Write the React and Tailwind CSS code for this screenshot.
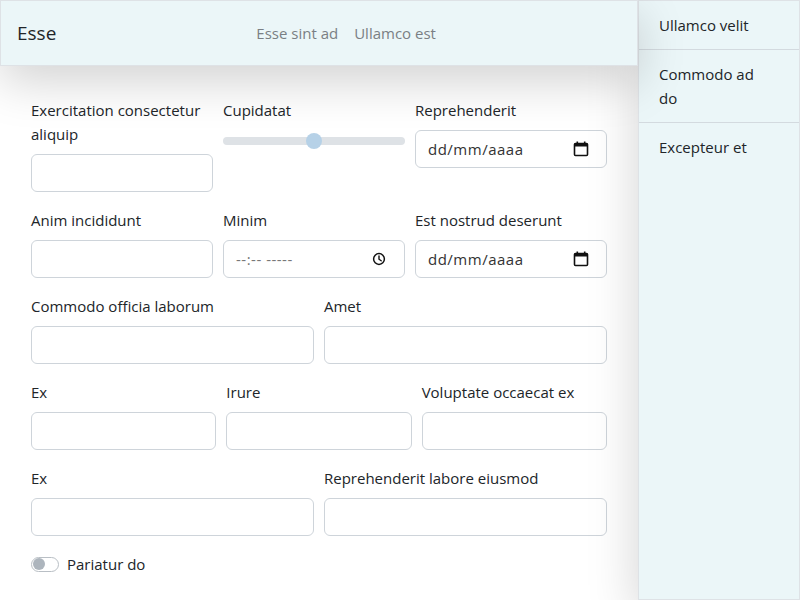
import React from "react";

const font = { fontFamily: '"Open Sans", "Noto Sans", sans-serif' };

function Label({ children }) {
  return <div className="text-[15px] leading-6 text-[#212529] mb-2">{children}</div>;
}

function TextBox() {
  return <div className="h-[38px] rounded-[6px] border border-[#ced4da] bg-white" />;
}

function CalendarIcon() {
  return (
    <svg width="18" height="18" viewBox="0 0 18 18" className="shrink-0">
      <rect x="2.5" y="3.5" width="13" height="12" rx="1" fill="none" stroke="#111" strokeWidth="1.6" />
      <rect x="2.5" y="3.5" width="13" height="3" fill="#111" />
      <rect x="4.5" y="1.5" width="1.6" height="3" fill="#111" />
      <rect x="11.9" y="1.5" width="1.6" height="3" fill="#111" />
    </svg>
  );
}

function ClockIcon() {
  return (
    <svg width="14" height="14" viewBox="0 0 14 14" className="shrink-0">
      <circle cx="7" cy="7" r="5.4" fill="none" stroke="#111" strokeWidth="1.5" />
      <path d="M7 4v3.2l2.2 1.6" fill="none" stroke="#111" strokeWidth="1.4" strokeLinecap="round" />
    </svg>
  );
}

function DateBox() {
  return (
    <div className="h-[38px] rounded-[6px] border border-[#ced4da] bg-white flex items-center pl-3 pr-[16px] justify-between">
      <span className="text-[15px] text-[#333] tracking-[0.5px]">dd/mm/aaaa</span>
      <CalendarIcon />
    </div>
  );
}

function TimeBox() {
  return (
    <div className="h-[38px] rounded-[6px] border border-[#ced4da] bg-white flex items-center pl-3 pr-[18px] justify-between">
      <span className="text-[15px] text-[#777] tracking-[0.5px]">--:-- -----</span>
      <ClockIcon />
    </div>
  );
}

export default function App() {
  return (
    <div className="flex w-[800px] h-[600px] overflow-hidden bg-white" style={font}>
      <div className="w-[638px] shrink-0 flex flex-col">
        <header className="relative z-10 h-[66px] shrink-0 bg-[#ebf6f8] border border-[#dee2e6] shadow-[0_16px_48px_rgba(0,0,0,0.175)] flex items-center px-4">
          <span className="text-[19px] text-[#212529]">Esse</span>
          <nav className="ml-[200px] flex gap-4 text-[15px] text-[#7a7f84]">
            <span>Esse sint ad</span>
            <span>Ullamco est</span>
          </nav>
        </header>
        <main className="flex-1 pt-[32px] px-[31px] flex flex-col gap-4">
          <div className="grid grid-cols-[182px_182px_192px] gap-x-[10px]">
            <div>
              <Label>Exercitation consectetur aliquip</Label>
              <TextBox />
            </div>
            <div>
              <Label>Cupidatat</Label>
              <div className="h-6 flex items-center relative -mt-[1px]">
                <div className="w-full h-2 rounded-full bg-[#dee2e6]" />
                <div className="absolute left-[83px] top-[4px] w-4 h-4 rounded-full bg-[#b6d1e7]" />
              </div>
            </div>
            <div>
              <Label>Reprehenderit</Label>
              <DateBox />
            </div>
          </div>
          <div className="grid grid-cols-[182px_182px_192px] gap-x-[10px]">
            <div>
              <Label>Anim incididunt</Label>
              <TextBox />
            </div>
            <div>
              <Label>Minim</Label>
              <TimeBox />
            </div>
            <div>
              <Label>Est nostrud deserunt</Label>
              <DateBox />
            </div>
          </div>
          <div className="grid grid-cols-2 gap-x-[10px]">
            <div>
              <Label>Commodo officia laborum</Label>
              <TextBox />
            </div>
            <div>
              <Label>Amet</Label>
              <TextBox />
            </div>
          </div>
          <div className="grid grid-cols-3 gap-x-[10px]">
            <div>
              <Label>Ex</Label>
              <TextBox />
            </div>
            <div>
              <Label>Irure</Label>
              <TextBox />
            </div>
            <div>
              <Label>Voluptate occaecat ex</Label>
              <TextBox />
            </div>
          </div>
          <div className="grid grid-cols-2 gap-x-[10px]">
            <div>
              <Label>Ex</Label>
              <TextBox />
            </div>
            <div>
              <Label>Reprehenderit labore eiusmod</Label>
              <TextBox />
            </div>
          </div>
          <div className="flex items-center h-6 gap-2">
            <div className="w-[28px] h-[15px] rounded-full border border-[#b9bfc5] bg-white flex items-center px-[1px]">
              <div className="w-[12px] h-[12px] rounded-full bg-[#adb5bd]" />
            </div>
            <span className="text-[15px] text-[#212529]">Pariatur do</span>
          </div>
        </main>
      </div>
      <aside className="relative w-[162px] shrink-0 h-[600px] bg-[#ebf6f8] border border-[#dee2e6] shadow-[0_16px_48px_rgba(0,0,0,0.175)] flex flex-col">
        <div className="px-5 py-3 border-b border-[#d3dadf] text-[15px] leading-6 text-[#212529]">Ullamco velit</div>
        <div className="px-5 py-3 border-b border-[#d3dadf] text-[15px] leading-6 text-[#212529]">
          <div className="w-[100px]">Commodo ad do</div>
        </div>
        <div className="px-5 py-3 text-[15px] leading-6 text-[#212529]">Excepteur et</div>
      </aside>
    </div>
  );
}
